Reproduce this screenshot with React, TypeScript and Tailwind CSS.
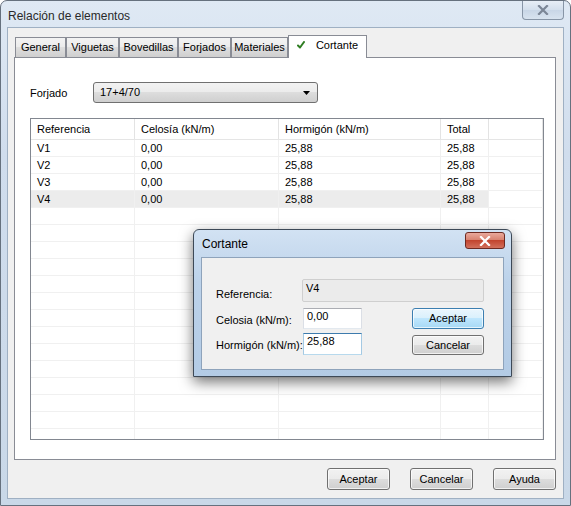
import React from 'react';
import clsx from 'clsx';

const btnGray =
  'border-[#707070] bg-[linear-gradient(#f2f2f2,#ebebeb_50%,#dddddd_50%,#cfcfcf)]';
const btnBlue =
  'border-[#3c7fb1] bg-[linear-gradient(#eaf6fd,#d9f0fc_50%,#bee6fd_50%,#a7d9f5)]';

const Button = ({ label, className, primary }: { label: string; className: string; primary?: boolean }) => (
  <div
    className={clsx(
      'rounded-[3px] border flex items-center justify-center text-[11px] text-black shadow-[inset_0_0_0_1px_rgba(255,255,255,0.7)]',
      primary ? btnBlue : btnGray,
      className
    )}
  >
    {label}
  </div>
);

const cols = ['w-[104px]', 'w-[144px]', 'w-[162px]', 'w-[48px]', 'flex-1'];

const rows = [
  ['V1', '0,00', '25,88', '25,88'],
  ['V2', '0,00', '25,88', '25,88'],
  ['V3', '0,00', '25,88', '25,88'],
  ['V4', '0,00', '25,88', '25,88'],
];

const tabs = [
  { label: 'General', w: 'w-[51px]' },
  { label: 'Viguetas', w: 'w-[53px]' },
  { label: 'Bovedillas', w: 'w-[59px]' },
  { label: 'Forjados', w: 'w-[53px]' },
  { label: 'Materiales', w: 'w-[57px]' },
];

const Check = () => (
  <svg width="8" height="8" viewBox="0 0 8 8" className="mr-[11px] mb-[2px]">
    <path d="M1 4.5 L3 6.5 L7 1" fill="none" stroke="#2f7d22" strokeWidth="2" strokeLinecap="round" strokeLinejoin="round" />
  </svg>
);

const CloseX = ({ color }: { color: string }) => (
  <svg width="12" height="10" viewBox="0 0 12 10">
    <path d="M2 1 L10 9 M10 1 L2 9" stroke={color} strokeWidth="2.2" strokeLinecap="square" />
  </svg>
);

export default function App() {
  return (
    <div className="w-[571px] h-[506px] relative bg-white font-['Liberation_Sans',Arial,sans-serif] text-black select-none">
      {/* main window */}
      <div className="w-full h-full flex flex-col rounded-t-[7px] border border-[#66717e] bg-[linear-gradient(#dfe9f4,#d0dded_30%,#c9d8e8)]">
        <div className="h-[26px] flex items-start justify-between pl-[7px] pr-[6px]">
          <span className="text-[12px] text-[#2a2a2a] mt-[6px]">Relación de elementos</span>
          <div className="w-[42px] h-[19px] rounded-b-[4px] border border-t-0 border-[#8795a6] bg-[linear-gradient(#e7eef6,#d3dfec_50%,#c8d6e6_50%,#d8e3ef)] flex items-center justify-center">
            <CloseX color="#7b8696" />
          </div>
        </div>

        <div className="mx-[6px] mb-[6px] flex-1 bg-[#f0f0f0] border border-[#9fb0c3] flex flex-col pl-[6px] pr-[7px]">
          {/* tabs */}
          <div className="mt-[7px] h-[22px] flex items-end pl-[1px] relative z-10 text-[11px]">
            {tabs.map((t) => (
              <div
                key={t.label}
                className={clsx(
                  t.w,
                  'h-[20px] border border-b-0 border-[#898c95] bg-[linear-gradient(#f3f3f3,#ebebeb_50%,#dedede_50%,#cfcfcf)] flex items-center justify-center'
                )}
              >
                {t.label}
              </div>
            ))}
            <div className="w-[79px] h-[23px] -mb-px border border-b-0 border-[#898c95] bg-white flex items-center justify-center pb-[3px]">
              <Check />
              <span>Cortante</span>
            </div>
          </div>

          {/* panel */}
          <div className="h-[403px] bg-white border border-[#898c95] flex flex-col pl-[15px] text-[11px]">
            <div className="mt-[24px] flex items-center">
              <span className="w-[63px] pt-[1px]">Forjado</span>
              <div className={clsx('w-[225px] h-[21px] rounded-[3px] border flex items-center justify-between pl-[6px] pr-[7px]', btnGray)}>
                <span>17+4/70</span>
                <svg width="7" height="4" viewBox="0 0 7 4">
                  <path d="M0 0 H7 L3.5 4 Z" fill="#000" />
                </svg>
              </div>
            </div>

            {/* list view */}
            <div className="mt-[15px] w-[514px] h-[322px] border border-[#828790] bg-white overflow-hidden flex flex-col">
              <div className="h-[21px] flex border-b border-[#e5e5e5] shrink-0">
                {['Referencia', 'Celosía (kN/m)', 'Hormigón (kN/m)', 'Total', ''].map((h, i) => (
                  <div key={i} className={clsx(cols[i], 'border-r border-[#e3e3e3] pl-[6px] flex items-center')}>
                    {h}
                  </div>
                ))}
              </div>
              {rows.map((r, ri) => (
                <div key={ri} className="h-[17px] flex border-b border-[#f0f0f0] shrink-0">
                  {[...r, ''].map((c, ci) => (
                    <div
                      key={ci}
                      className={clsx(
                        cols[ci],
                        'border-r border-[#f0f0f0] pl-[6px] flex items-center',
                        ri === 3 && ci < 4 && 'bg-[#ececec]'
                      )}
                    >
                      {c}
                    </div>
                  ))}
                </div>
              ))}
              {Array.from({ length: 14 }).map((_, ri) => (
                <div key={ri} className="h-[17px] flex border-b border-[#f0f0f0] shrink-0">
                  {cols.map((w, ci) => (
                    <div key={ci} className={clsx(w, 'border-r border-[#f0f0f0]')} />
                  ))}
                </div>
              ))}
            </div>
          </div>

          {/* bottom buttons */}
          <div className="mt-[8px] flex justify-end gap-[20px]">
            <Button label="Aceptar" className="w-[63px] h-[22px]" />
            <Button label="Cancelar" className="w-[63px] h-[22px]" />
            <Button label="Ayuda" className="w-[63px] h-[22px]" />
          </div>
        </div>
      </div>

      {/* Cortante dialog */}
      <div className="absolute left-[193px] top-[229px] w-[319px] h-[148px] flex flex-col rounded-t-[6px] border border-[#3d4957] bg-[linear-gradient(#d2e2f3,#bcd2ea_35%,#b3cbe5)] shadow-[0_5px_14px_rgba(0,0,0,0.55)]">
        <div className="h-[27px] flex items-start justify-between pl-[8px] pr-[6px]">
          <span className="text-[12px] mt-[5px]">Cortante</span>
          <div className="mt-[2px] w-[40px] h-[17px] rounded-[3px] border border-[#6d2a22] bg-[linear-gradient(#e9a99c,#d77f6d_50%,#c2452f_50%,#d2705c)] flex items-center justify-center">
            <CloseX color="#ffffff" />
          </div>
        </div>
        <div className="mx-[7px] mb-[6px] flex-1 bg-[#f0f0f0] border border-[#8ea3bb] pt-[21px] pl-[14px] text-[11px] leading-[13px]">
          <div className="h-[23px] flex items-start">
            <span className="w-[86px] mt-[9px]">Referencia:</span>
            <div className="w-[182px] h-[23px] border border-[#cfcfcf] rounded-[2px] bg-[#ebebeb] pl-[3px] pt-[2px]">V4</div>
          </div>
          <div className="mt-[6px] h-[21px] flex items-start">
            <span className="w-[87px] mt-[6px]">Celosia (kN/m):</span>
            <div className="w-[59px] h-[21px] border border-[#abadb3] border-b-[#e3e9ef] border-x-[#dbdfe6] bg-white pl-[3px] pt-[1px]">0,00</div>
            <div className="w-[50px]" />
            <Button label="Aceptar" primary className="w-[72px] h-[21px]" />
          </div>
          <div className="mt-[4px] h-[22px] flex items-start">
            <span className="w-[87px] mt-[6px] whitespace-nowrap">Hormigón (kN/m):</span>
            <div className="w-[59px] h-[22px] border border-[#3d7bad] border-b-[#b7d9ed] border-x-[#a4c9e3] bg-white pl-[3px] pt-[1px]">25,88</div>
            <div className="w-[50px]" />
            <Button label="Cancelar" className="w-[72px] h-[20px] mt-[2px]" />
          </div>
        </div>
      </div>
    </div>
  );
}
